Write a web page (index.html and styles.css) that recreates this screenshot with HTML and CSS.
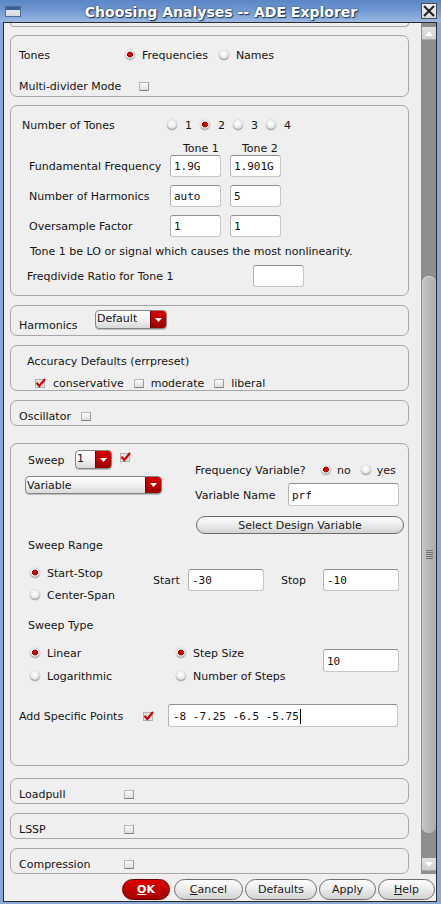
FILE: index.html
```html
<!DOCTYPE html>
<html>
<head>
<meta charset="utf-8">
<link rel="stylesheet" href="styles.css">
</head>
<body>
<div class="window">
  <div class="titlebar">
    <span class="win-icon"></span>
    <span class="title">Choosing Analyses -- ADE Explorer</span>
    <span class="close"><svg width="14" height="14" viewBox="0 0 14 14"><path d="M2 2 L12 12 M12 2 L2 12" stroke="#1c1c1c" stroke-width="1.9" fill="none"/></svg></span>
  </div>
  <div class="main">
    <div class="body">
      <div class="scroll">
        <div class="panel-cut"></div>

        <div class="panel p1">
          <div class="row h20">
            <span class="lbl tones-lbl">Tones</span>
            <span class="choice"><span class="radio on"></span><span>Frequencies</span></span>
            <span class="choice names-choice"><span class="radio"></span><span>Names</span></span>
          </div>
          <div class="row h20 mdm-row">
            <span class="lbl mdm-lbl">Multi-divider Mode</span>
            <span class="cb"></span>
          </div>
        </div>

        <div class="panel p2">
          <div class="row h20 nt-row">
            <span class="lbl nt-lbl">Number of Tones</span>
            <span class="choice c8"><span class="radio"></span><span>1</span></span>
            <span class="choice c8 ml8"><span class="radio on"></span><span>2</span></span>
            <span class="choice c8 ml8"><span class="radio"></span><span>3</span></span>
            <span class="choice c8 ml8"><span class="radio"></span><span>4</span></span>
          </div>
          <div class="row tone-head">
            <span class="th th1">Tone 1</span>
            <span class="th th2">Tone 2</span>
          </div>
          <div class="row h22 tone-row">
            <span class="lbl tr-lbl">Fundamental Frequency</span>
            <span class="in in51">1.9G</span>
            <span class="in in51 ml9">1.901G</span>
          </div>
          <div class="row h22 tone-row mt8">
            <span class="lbl tr-lbl">Number of Harmonics</span>
            <span class="in in51">auto</span>
            <span class="in in51 ml9">5</span>
          </div>
          <div class="row h22 tone-row mt8">
            <span class="lbl tr-lbl">Oversample Factor</span>
            <span class="in in51">1</span>
            <span class="in in51 ml9">1</span>
          </div>
          <div class="row note">Tone 1 be LO or signal which causes the most nonlinearity.</div>
          <div class="row h22 fd-row">
            <span class="lbl fd-lbl">Freqdivide Ratio for Tone 1</span>
            <span class="in in51"></span>
          </div>
        </div>

        <div class="panel p3">
          <div class="row harm-row">
            <span class="lbl harm-lbl">Harmonics</span>
            <span class="dd dd-harm"><span class="dd-val">Default</span><span class="dd-arr"><svg width="7" height="4" viewBox="0 0 7 4"><path d="M0 0 H7 L3.5 4 Z" fill="#fff"/></svg></span></span>
          </div>
        </div>

        <div class="panel p4">
          <div class="acc-title">Accuracy Defaults (errpreset)</div>
          <div class="row acc-row">
            <span class="choice"><svg class="chk" width="11" height="10" viewBox="0 0 11 10"><rect x="0.5" y="1.5" width="9" height="8" fill="#e4e4e4" stroke="#b0b0b0"/><path d="M1.5 4.8 L4.3 8 L10 1" stroke="#d10000" stroke-width="2.1" fill="none"/></svg><span>conservative</span></span>
            <span class="choice ml10"><span class="cb"></span><span>moderate</span></span>
            <span class="choice ml10"><span class="cb"></span><span>liberal</span></span>
          </div>
        </div>

        <div class="panel p5">
          <div class="row single">
            <span class="lbl osc-lbl">Oscillator</span>
            <span class="cb"></span>
          </div>
        </div>

        <div class="panel sweep">
          <div class="sw-top">
            <div class="sw-left">
              <div class="sw-row1">
                <span class="lbl sw-lbl">Sweep</span>
                <span class="dd dd-num"><span class="dd-val">1</span><span class="dd-arr"><svg width="7" height="4" viewBox="0 0 7 4"><path d="M0 0 H7 L3.5 4 Z" fill="#fff"/></svg></span></span>
                <svg class="chk sw-chk" width="11" height="10" viewBox="0 0 11 10"><rect x="0.5" y="1.5" width="9" height="8" fill="#e4e4e4" stroke="#b0b0b0"/><path d="M1.5 4.8 L4.3 8 L10 1" stroke="#d10000" stroke-width="2.1" fill="none"/></svg>
              </div>
              <span class="dd dd-var"><span class="dd-val">Variable</span><span class="dd-arr"><svg width="7" height="4" viewBox="0 0 7 4"><path d="M0 0 H7 L3.5 4 Z" fill="#fff"/></svg></span></span>
            </div>
            <div class="sw-right">
              <div class="row fv-row">
                <span class="lbl fv-lbl">Frequency Variable?</span>
                <span class="choice c6"><span class="radio on"></span><span>no</span></span>
                <span class="choice c6 ml10"><span class="radio"></span><span>yes</span></span>
              </div>
              <div class="row vn-row">
                <span class="lbl vn-lbl">Variable Name</span>
                <span class="in vn-in">prf</span>
              </div>
              <div class="btn sdv">Select Design Variable</div>
            </div>
          </div>

          <div class="sec-title sr-title">Sweep Range</div>
          <div class="range">
            <div class="radio-col range-col">
              <span class="choice line first"><span class="radio on"></span><span>Start-Stop</span></span>
              <span class="choice line second6"><span class="radio"></span><span>Center-Span</span></span>
            </div>
            <div class="row range-fields">
              <span class="lbl start-lbl">Start</span>
              <span class="in in76">-30</span>
              <span class="lbl stop-lbl">Stop</span>
              <span class="in in76">-10</span>
            </div>
          </div>

          <div class="sec-title st-title">Sweep Type</div>
          <div class="type">
            <div class="radio-col type-col1">
              <span class="choice line first"><span class="radio on"></span><span>Linear</span></span>
              <span class="choice line second7"><span class="radio"></span><span>Logarithmic</span></span>
            </div>
            <div class="radio-col type-col2">
              <span class="choice line first"><span class="radio on"></span><span>Step Size</span></span>
              <span class="choice line second7"><span class="radio"></span><span>Number of Steps</span></span>
            </div>
            <span class="in in76 step-in">10</span>
          </div>

          <div class="row asp-row">
            <span class="lbl asp-lbl">Add Specific Points</span>
            <svg class="chk" width="11" height="10" viewBox="0 0 11 10"><rect x="0.5" y="1.5" width="9" height="8" fill="#e4e4e4" stroke="#b0b0b0"/><path d="M1.5 4.8 L4.3 8 L10 1" stroke="#d10000" stroke-width="2.1" fill="none"/></svg>
            <span class="in asp-in">-8 -7.25 -6.5 -5.75<span class="caret"></span></span>
          </div>
        </div>

        <div class="panel small lp">
          <div class="row single"><span class="lbl sm-lbl">Loadpull</span><span class="cb"></span></div>
        </div>
        <div class="panel small ls">
          <div class="row single"><span class="lbl sm-lbl">LSSP</span><span class="cb"></span></div>
        </div>
        <div class="panel small cp">
          <div class="row single"><span class="lbl sm-lbl">Compression</span><span class="cb"></span></div>
        </div>
      </div>

      <div class="scrollbar">
        <div class="sb-gap top"></div>
        <div class="sb-btn"><svg width="8" height="5" viewBox="0 0 8 5"><path d="M0 5 L4 0 L8 5 Z" fill="#fff"/></svg></div>
        <div class="sb-track1"></div>
        <div class="thumb"><span class="grip"></span></div>
        <div class="sb-track2"></div>
        <div class="sb-btn"><svg width="8" height="5" viewBox="0 0 8 5"><path d="M0 0 L8 0 L4 5 Z" fill="#fff"/></svg></div>
      </div>
    </div>

    <div class="buttons">
      <span class="btn ok"><u>O</u>K</span>
      <span class="btn cancel"><u>C</u>ancel</span>
      <span class="btn defaults">Defaults</span>
      <span class="btn apply">Apply</span>
      <span class="btn help"><u>H</u>elp</span>
    </div>
  </div>
</div>
</body>
</html>
```

FILE: styles.css
```css
* { box-sizing: border-box; }
html, body { margin: 0; padding: 0; }
body {
  width: 441px; height: 904px; overflow: hidden;
  font-family: "DejaVu Sans", sans-serif;
  font-size: 11px; line-height: 14px; color: #141414;
  background: #88a9d8;
}
.window { width: 441px; height: 904px; display: flex; flex-direction: column; background: #88a9d8; }

/* title bar */
.titlebar {
  height: 22px; flex: none; display: flex; align-items: center;
  background: linear-gradient(to bottom, #5a86c6 0%, #6f97d0 45%, #9ab8e2 100%);
}
.win-icon {
  width: 16px; height: 11px; margin-left: 5px; flex: none;
  border: 1px solid #4b6d9c;
  background: linear-gradient(to bottom, #3d5f92 0, #3d5f92 3px, #e2e5e9 3px, #d7dbe0 100%);
}
.title {
  flex: 1; text-align: center; color: #fff;
  font-weight: bold; font-size: 14px; line-height: 18px; padding-top: 1px;
  text-shadow: 1px 1px 1px #1d3557, 0 0 2px #2b4a78;
}
.close {
  width: 16px; height: 16px; margin-right: 4px; flex: none;
  border: 1px solid #4a4a4a; background: linear-gradient(#eef0f3, #d5d9de);
  display: flex; align-items: center; justify-content: center;
}

/* main frame */
.main {
  flex: 1; margin: 0 4px 2px 3px; border: 1px solid #2c2c2c;
  background: #efefef; display: flex; flex-direction: column; min-height: 0;
}
.body { display: flex; height: 851px; flex: none; }
.scroll {
  flex: 1; padding-left: 6px; display: flex; flex-direction: column;
  align-items: flex-start; overflow: hidden;
}

/* panels */
.panel { width: 399px; border: 1px solid #a6a6a6; border-radius: 7px; flex: none; }
.panel-cut {
  width: 399px; height: 4px; flex: none;
  border: 1px solid #a6a6a6; border-top: none; border-radius: 0 0 7px 7px;
}
.p1 { margin-top: 8px; height: 62px; padding: 9px 0 0 8px; }
.p2 { margin-top: 8px; height: 191px; padding-top: 9px; }
.p3 { margin-top: 9px; height: 31px; padding: 4px 0 0 8px; }
.p4 { margin-top: 9px; height: 46px; padding-top: 8px; }
.p5 { margin-top: 9px; height: 26px; padding: 8px 0 0 8px; }
.sweep { margin-top: 17px; height: 323px; }
.lp { margin-top: 12px; }
.ls, .cp { margin-top: 9px; }
.small { height: 26px; padding: 8px 0 0 8px; }

.row { display: flex; align-items: center; }
.h20 { height: 20px; }
.h22 { height: 22px; }
.single { height: 14px; }
.lbl { flex: none; white-space: nowrap; padding-top: 2px; }
.mt8 { margin-top: 8px; }
.ml8 { margin-left: 8px; }
.ml9 { margin-left: 9px; }
.ml10 { margin-left: 10px; }

.choice { display: flex; align-items: center; gap: 7px; flex: none; white-space: nowrap; }
.choice > span:last-child { padding-top: 2px; }
.choice.c8 { gap: 8px; }
.choice.c6 { gap: 6px; }

/* radio / checkbox */
.radio {
  width: 10px; height: 10px; border-radius: 50%; flex: none;
  background: radial-gradient(circle at 45% 35%, #ffffff 0%, #eeeeee 40%, #bdbdbd 100%);
  box-shadow: inset 0 -1px 0 #a2a2a2, 0 0 0 0.5px #c6c6c6;
}
.radio.on {
  background:
    radial-gradient(circle at 50% 45%, #ee0000 0, #c40000 2.2px, #8e0000 2.7px, transparent 3.2px),
    radial-gradient(circle at 45% 35%, #ffffff 0%, #eeeeee 40%, #bdbdbd 100%);
}
.cb {
  width: 10px; height: 9px; flex: none;
  border: 1px solid #b6b6b6; border-bottom-color: #7f7f7f; border-right-color: #999;
  background: linear-gradient(#fbfbfb, #dedede);
}
.chk { flex: none; display: block; }

/* dropdown */
.dd {
  display: flex; height: 19px; flex: none;
  border: 1px solid #858585; border-radius: 4px; overflow: hidden;
  background: linear-gradient(#ffffff, #f1f1f1 50%, #d9d9d9);
  box-shadow: 0 1px 0 #bfbfbf;
}
.dd-val { flex: 1; padding-left: 1px; line-height: 16px; white-space: nowrap; }
.dd-arr {
  width: 16px; flex: none; display: flex; align-items: center; justify-content: center;
  background: linear-gradient(#d80000, #b40000 60%, #960000);
  border-left: 1px solid #7a0000;
}

/* inputs */
.in {
  display: flex; align-items: center; flex: none;
  height: 22px; padding: 2px 0 0 3px;
  background: #fff; border: 1px solid #c6c6c6; border-top-color: #8f8f8f; border-left-color: #b3b3b3;
  border-radius: 3px;
  font-family: "DejaVu Sans Mono", monospace; font-size: 11px; color: #111;
}
.in51 { width: 51px; }
.in76 { width: 76px; }

/* buttons */
.btn {
  display: flex; align-items: center; justify-content: center; flex: none;
  border: 1px solid #6c6c6c; border-radius: 11px;
  background: linear-gradient(#fdfdfd, #eeeeee 45%, #d2d2d2);
  color: #1b1b1b; white-space: nowrap; padding-top: 1px;
}
.btn u { text-decoration: underline; }

/* panel 1 */
.tones-lbl { width: 106px; }
.names-choice { margin-left: 11px; }
.mdm-row { margin-top: 11px; }
.mdm-lbl { width: 120px; }

/* panel 2 */
.nt-row { padding-left: 11px; }
.nt-lbl { width: 145px; }
.tone-head { height: 12px; margin-top: 8px; padding-left: 159px; line-height: 12px; }
.th { width: 51px; flex: none; }
.th1 { padding-left: 13px; }
.th2 { margin-left: 9px; padding-left: 12px; }
.tone-row { padding-left: 18px; }
.tr-lbl { width: 141px; }
.note { height: 14px; margin-top: 7px; padding: 1px 0 0 19px; white-space: nowrap; }
.fd-row { margin-top: 7px; padding-left: 16px; }
.fd-lbl { width: 226px; }

/* panel 3 */
.harm-row { align-items: flex-start; }
.harm-lbl { width: 76px; margin-top: 7px; }
.dd-harm { width: 72px; }

/* panel 4 */
.acc-title { height: 14px; padding: 1px 0 0 16px; }
.acc-row { height: 14px; margin-top: 8px; padding-left: 24px; }

/* panel 5 */
.osc-lbl { width: 62px; }

/* sweep */
.sw-top { display: flex; align-items: flex-start; }
.sw-left { width: 184px; flex: none; display: flex; flex-direction: column; align-items: flex-start; }
.sw-row1 { display: flex; align-items: center; height: 19px; margin-top: 6px; padding-left: 17px; }
.sw-lbl { width: 47px; }
.dd-num { width: 37px; }
.sw-chk { margin-left: 8px; align-self: flex-start; margin-top: 2px; }
.dd-var { width: 137px; height: 18px; margin: 7px 0 0 14px; }
.dd-var .dd-val { line-height: 15px; padding-top: 1px; }
.sw-right { width: 209px; flex: none; display: flex; flex-direction: column; }
.fv-row { height: 20px; margin-top: 16px; }
.fv-lbl { width: 126px; }
.vn-row { height: 23px; margin-top: 3px; }
.vn-lbl { width: 93px; }
.vn-in { width: 111px; height: 23px; }
.sdv { width: 208px; height: 18px; margin: 10px 0 0 1px; border-radius: 9px; }

.sec-title { height: 14px; padding: 1px 0 0 17px; }
.sr-title { margin-top: 4px; }
.st-title { margin-top: 15px; }

.range, .type { display: flex; align-items: flex-start; margin-top: 10px; }
.radio-col { display: flex; flex-direction: column; flex: none; }
.range-col { width: 142px; padding-left: 19px; }
.line { height: 16px; }
.line.first { margin-top: 3px; }
.line.second6 { margin-top: 6px; }
.line.second7 { margin-top: 7px; }
.range-fields { height: 22px; margin-top: 7px; }
.start-lbl { width: 35px; }
.stop-lbl { width: 42px; margin-left: 17px; }

.type-col1 { width: 165px; padding-left: 19px; }
.type-col2 { width: 147px; }
.step-in { height: 23px; margin-top: 7px; }

.asp-row { height: 23px; margin-top: 20px; padding-left: 8px; }
.asp-lbl { width: 124px; }
.asp-in { width: 230px; height: 23px; margin-left: 14px; padding-left: 4px; white-space: pre; }
.caret { display: inline-block; width: 1px; height: 15px; background: #000; margin-left: 1px; }

.sm-lbl { width: 105px; }

/* scrollbar */
.scrollbar { width: 15px; flex: none; background: #8e8e8e; display: flex; flex-direction: column; }
.sb-gap.top { height: 4px; }
.sb-btn {
  height: 13px; width: 14px; margin-left: 1px; flex: none;
  background: linear-gradient(#e0e0e0, #cfcfcf);
  display: flex; align-items: center; justify-content: center;
  box-shadow: inset 0 -1px 0 #a8a8a8;
}
.sb-track1 { height: 236px; flex: none; }
.thumb {
  height: 557px; width: 14px; margin-left: 1px; flex: none;
  border-radius: 7px;
  background: linear-gradient(to right, #c4c4c4, #b6b6b6 60%, #adadad);
  box-shadow: inset 0 1px 0 #d6d6d6, inset 1px 0 0 #cdcdcd;
  display: flex; align-items: center; justify-content: center;
}
.grip {
  width: 7px; height: 9px;
  background: repeating-linear-gradient(to bottom, #6f6f6f 0, #6f6f6f 1px, transparent 1px, transparent 2px);
}
.sb-track2 { height: 25px; flex: none; }

/* bottom buttons */
.buttons { flex: 1; display: flex; justify-content: flex-end; align-items: flex-start; gap: 2px; padding: 5px 1px 0 0; }
.buttons .btn { height: 21px; }
.ok {
  width: 48px; margin-right: 2px;
  background: linear-gradient(#e00000, #c00000 50%, #a20000);
  border-color: #6e0000; color: #fff; font-weight: bold;
}
.cancel { width: 69px; }
.defaults { width: 72px; }
.apply { width: 57px; }
.help { width: 57px; }
```
